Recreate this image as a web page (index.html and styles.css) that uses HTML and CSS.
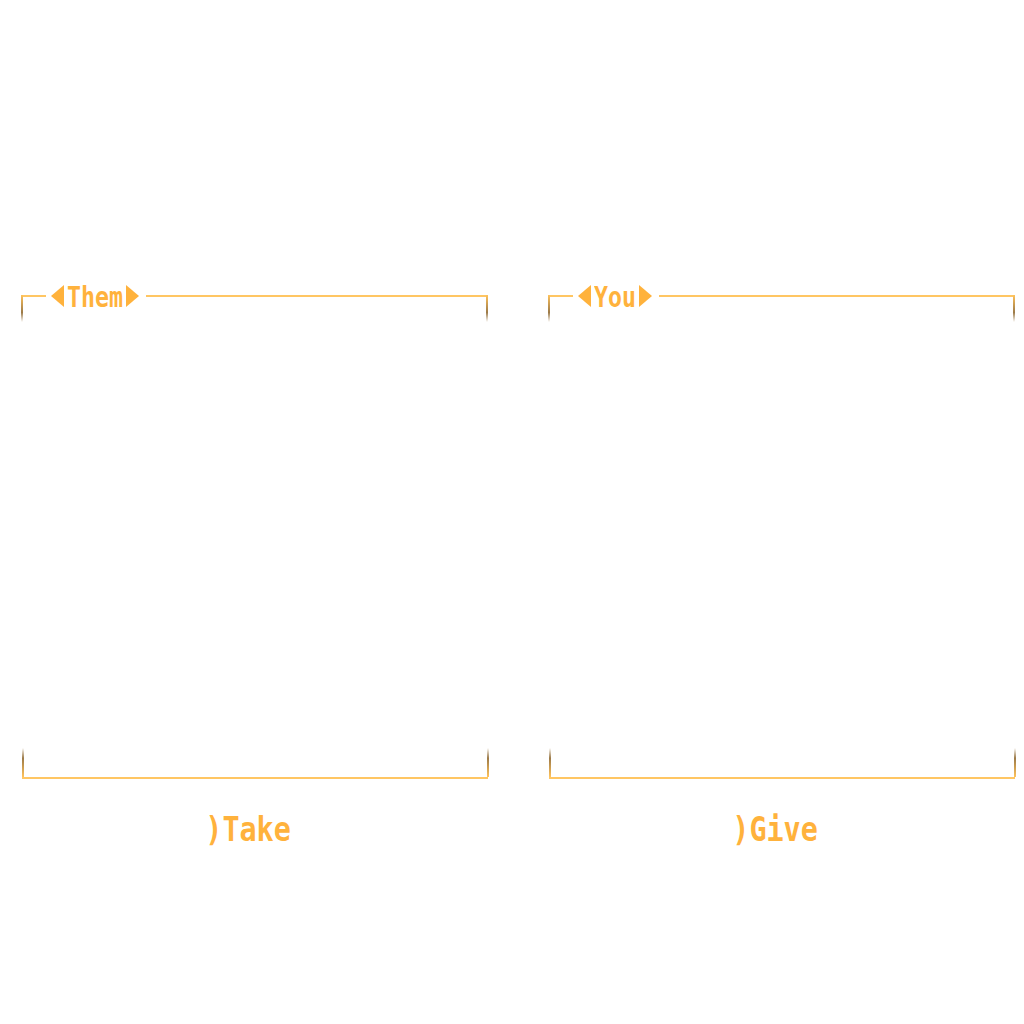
FILE: index.html
```html
<!DOCTYPE html>
<html lang="en">

<head>
    <meta charset="UTF-8">
    <meta name="viewport" content="width=device-width, initial-scale=1.0">
    <title>Trade</title>
    <link rel="stylesheet" href="styles.css">
</head>

<body>
    <div class="panes">
        <section class="pane">
            <div class="pane-head">
                <div class="rule-short"></div>
                <div class="pane-title">
                    <svg class="arrow" viewBox="0 0 13 22"><polygon points="13,0 13,22 0,11" /></svg>
                    <span class="label label-4">Them</span>
                    <svg class="arrow" viewBox="0 0 13 22"><polygon points="0,0 0,22 13,11" /></svg>
                </div>
                <div class="rule"></div>
            </div>
            <div class="pane-body"></div>
            <div class="pane-action"><span class="action">)Take</span></div>
        </section>

        <section class="pane">
            <div class="pane-head">
                <div class="rule-short"></div>
                <div class="pane-title">
                    <svg class="arrow" viewBox="0 0 13 22"><polygon points="13,0 13,22 0,11" /></svg>
                    <span class="label label-3">You</span>
                    <svg class="arrow" viewBox="0 0 13 22"><polygon points="0,0 0,22 13,11" /></svg>
                </div>
                <div class="rule"></div>
            </div>
            <div class="pane-body"></div>
            <div class="pane-action"><span class="action">)Give</span></div>
        </section>
    </div>
</body>

</html>
```

FILE: styles.css
```css
body {
    margin: 0;
    background: #ffffff;
    font-family: "DejaVu Sans Mono", "Liberation Mono", monospace;
}

.panes {
    display: flex;
    gap: 61px;
    padding: 284px 0 0 22px;
}

.pane {
    width: 466px;
}

.pane-head {
    position: relative;
    display: flex;
    align-items: center;
    height: 24px;
}

.pane-head::before,
.pane-head::after {
    content: "";
    position: absolute;
    top: 11px;
    width: 2px;
    height: 27px;
    background: linear-gradient(to bottom, #ffc35c, #9c7a48 65%, rgba(156, 122, 72, 0));
}

.pane-head::before {
    left: -1px;
}

.pane-head::after {
    right: 0;
}

.rule-short {
    width: 24px;
    height: 2px;
    background: #ffc663;
}

.rule {
    flex: 1;
    height: 2px;
    background: #ffc663;
}

.pane-title {
    display: flex;
    align-items: center;
    gap: 3px;
    margin: 0 7px 0 5px;
    color: #ffb23c;
    font-size: 28px;
    font-weight: bold;
    line-height: 24px;
}

/* narrow glyphs: scale the mono face down horizontally */
.label {
    display: inline-block;
    transform: scaleX(0.83);
    transform-origin: left center;
    margin-top: 3px;
}

.label-4 {
    margin-right: -11.5px;
}

.label-3 {
    margin-right: -8.5px;
}

.arrow {
    width: 13px;
    height: 22px;
    fill: #ffb23c;
}

.pane-body {
    position: relative;
    height: 469px;
    border-bottom: 2px solid #ffc663;
}

.pane-body::before,
.pane-body::after {
    content: "";
    position: absolute;
    bottom: 0;
    width: 2px;
    height: 29px;
    background: linear-gradient(to top, #ffc35c, #9c7a48 65%, rgba(156, 122, 72, 0));
}

.pane-body::before {
    left: 0;
}

.pane-body::after {
    right: -1px;
}

.pane-action {
    display: flex;
    justify-content: center;
    margin: 33px 0 0 4px;
}

.action {
    display: inline-block;
    width: 6ch;
    color: #ffb23c;
    font-size: 33px;
    font-weight: bold;
    line-height: 36px;
    transform: scaleX(0.86);
}
```
